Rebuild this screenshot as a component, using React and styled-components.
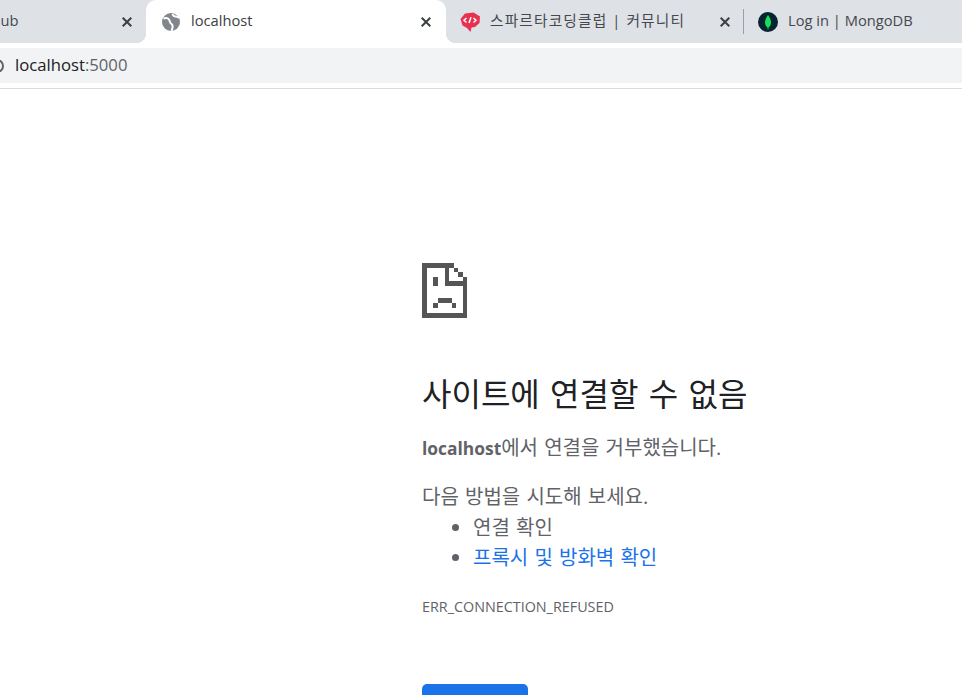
import React from "react";
import styled, { createGlobalStyle, css } from "styled-components";

const Global = createGlobalStyle`
  html, body { margin: 0; padding: 0; background: #fff; }
  #root { width: 962px; height: 695px; overflow: hidden; }
`;
const sans = `"Open Sans", "Noto Sans CJK KR", sans-serif`;

const Window = styled.div`
  width: 962px; height: 695px; overflow: hidden; display: flex; flex-direction: column;
  font-family: ${sans}; background: #fff;
`;
const TabStrip = styled.div`
  height: 43px; flex: none; display: flex; background: #dee1e6; margin-left: -74px; width: 1100px;
`;
const Tab = styled.div`
  position: relative; flex: none; box-sizing: border-box; height: 43px;
  width: ${p => p.$width}px; padding: 0 ${p => p.$pr}px 0 ${p => p.$pl}px;
  display: flex; align-items: center; gap: ${p => p.$gap}px;
  font-size: 14.7px; color: #45494d; white-space: nowrap;
  ${p => p.$active && css`
    background: #fff; border-radius: 10px 10px 0 0; color: #3c4043;
    &::before, &::after { content: ""; position: absolute; bottom: 0; width: 10px; height: 10px; }
    &::before { left: -10px; background: radial-gradient(circle at 0 0, #dee1e6 10px, #fff 10.5px); }
    &::after { right: -10px; background: radial-gradient(circle at 100% 0, #dee1e6 10px, #fff 10.5px); }
  `}
  ${p => p.$sep && css`
    &::after { content: ""; position: absolute; right: 0; top: 9px; bottom: 9px; width: 1px; background: #9aa0a6; }
  `}
`;
const TabTitle = styled.span`
  flex: 1; min-width: 0; overflow: hidden; position: relative; top: -2px;
  letter-spacing: ${p => p.$track || 0}px;
`;
const Favicon = styled.svg`flex: none; display: block;`;
const CloseIcon = styled.svg`flex: none; display: block; stroke: #3c4043; stroke-width: 2; fill: none;`;

const Toolbar = styled.div`
  height: 46px; flex: none; box-sizing: border-box; padding-top: 5px; background: #fff;
  border-bottom: 1px solid #dadce0;
`;
const AddressBar = styled.div`
  height: 35px; background: #f1f3f4; display: flex; align-items: center; gap: 11px;
  font-size: 16.7px; color: #202124; margin-left: -10px; padding-right: 10px;
`;
const InfoIcon = styled.svg`flex: none; display: block;`;
const Host = styled.span`position: relative; top: -1px;`;
const Port = styled.span`color: #5f6368;`;

const Main = styled.main`
  flex: 1; padding: 174px 0 0 422px; color: #5f6368; font-size: 20px;
  font-family: ${sans}; word-spacing: 1px;
`;
const SadPage = styled.svg`display: block; width: 45px; height: 55px;`;
const Heading = styled.h1`
  margin: 54px 0 0; font-size: 32px; font-weight: 400; line-height: 44px; color: #202124; word-spacing: 2px;
`;
const Lead = styled.p`margin: 17px 0 0; line-height: 30px; font-size: 20px;`;
const Bold = styled.strong`font-size: 17.4px;`;
const Suggest = styled.p`margin: 19px 0 0; line-height: 30px;`;
const List = styled.ul`margin: 1px 0 0; padding: 0 0 0 51px; list-style: disc;`;
const Item = styled.li`line-height: 30px; &::marker { color: #5f6368; }`;
const Link = styled.span`color: #1a73e8;`;
const Code = styled.div`margin-top: 24px; font-size: 14.35px; line-height: 20px; word-spacing: 0;`;
const Reload = styled.button`
  display: block; margin-top: 67px; width: 106px; height: 48px; border: 0; border-radius: 5px;
  background: #1a73e8; color: #fff; font: 500 18px ${sans};
`;

const Close = () => (
  <CloseIcon width="10" height="10" viewBox="0 0 10 10"><path d="M0.7 0.7 9.3 9.3M9.3 0.7 0.7 9.3" /></CloseIcon>
);
const Globe = () => (
  <Favicon width="18" height="18" viewBox="0 0 18 18">
    <circle cx="9" cy="9" r="9" fill="#80868b" />
    <path d="M1.5 5.5C4 4.5 6 5 7 6.5 8 8 7.5 9.5 9 10.5 10.5 11.5 11 12.5 10.5 14.5 10.3 15.5 10 16.5 9.5 18M10.5 1C11 2.5 12 3.5 13.5 3.5 15 3.500 16 4 17 5" fill="none" stroke="#fff" strokeWidth="2" />
  </Favicon>
);
const Sparta = () => (
  <Favicon width="20" height="20" viewBox="0 0 20 20">
    <path d="M5 1.500 13.500 0.500 20 4.500 19.500 11 15 15 11.500 15.500 10.500 20 7 16 2.500 13.500 0.500 7Z" fill="#e8304f" />
    <path d="M6.500 6 4 8.300 6.500 10.500M13.500 6 16 8.300 13.500 10.500M11 5.300 9 11" fill="none" stroke="#fff" strokeWidth="1.500" />
  </Favicon>
);
const Mongo = () => (
  <Favicon width="20" height="20" viewBox="0 0 20 20">
    <circle cx="10" cy="10" r="10" fill="#07252f" />
    <path d="M10 3C12 6 13 8 13 10.500 13 13 11.500 15 10.500 15.500L10.300 17.500H9.700L9.500 15.500C8.500 15 7 13 7 10.500 7 8 8 6 10 3Z" fill="#13e25f" />
  </Favicon>
);

export default function App() {
  return (
    <Window>
      <Global />
      <TabStrip>
        <Tab $width={220} $pl={44} $pr={14} $gap={8}>
          <TabTitle>GitHub</TabTitle><Close />
        </Tab>
        <Tab $active $width={300} $pl={16} $pr={15} $gap={11}>
          <Globe /><TabTitle>localhost</TabTitle><Close />
        </Tab>
        <Tab $sep $width={298} $pl={14} $pr={14} $gap={10}>
          <Sparta /><TabTitle $track={1.15}>스파르타코딩클럽 | 커뮤니티</TabTitle><Close />
        </Tab>
        <Tab $width={298} $pl={14} $pr={15} $gap={10}>
          <Mongo /><TabTitle>Log in | MongoDB</TabTitle><Close />
        </Tab>
      </TabStrip>
      <Toolbar>
        <AddressBar>
          <InfoIcon width="14" height="14" viewBox="0 0 14 14">
            <circle cx="7" cy="7" r="6" fill="none" stroke="#5f6368" strokeWidth="2" />
          </InfoIcon>
          <Host>localhost<Port>:5000</Port></Host>
        </AddressBar>
      </Toolbar>
      <Main>
        <SadPage viewBox="0 0 45 55" shapeRendering="crispEdges" fill="#555">
          <rect x="0" y="0" width="32" height="5" />
          <rect x="0" y="0" width="5" height="55" />
          <rect x="0" y="50" width="45" height="5" />
          <rect x="41" y="14" width="4" height="41" />
          <rect x="23" y="0" width="4" height="23" />
          <rect x="23" y="18" width="22" height="5" />
          <rect x="32" y="5" width="4" height="4" />
          <rect x="36" y="9" width="5" height="5" />
          <rect x="11" y="14" width="5" height="9" />
          <rect x="16" y="35" width="14" height="5" />
          <rect x="11" y="40" width="5" height="5" />
          <rect x="30" y="40" width="4" height="5" />
        </SadPage>
        <Heading>사이트에 연결할 수 없음</Heading>
        <Lead><Bold>localhost</Bold>에서 연결을 거부했습니다.</Lead>
        <Suggest>다음 방법을 시도해 보세요.</Suggest>
        <List>
          <Item>연결 확인</Item>
          <Item><Link>프록시 및 방화벽 확인</Link></Item>
        </List>
        <Code>ERR_CONNECTION_REFUSED</Code>
        <Reload>새로고침</Reload>
      </Main>
    </Window>
  );
}
